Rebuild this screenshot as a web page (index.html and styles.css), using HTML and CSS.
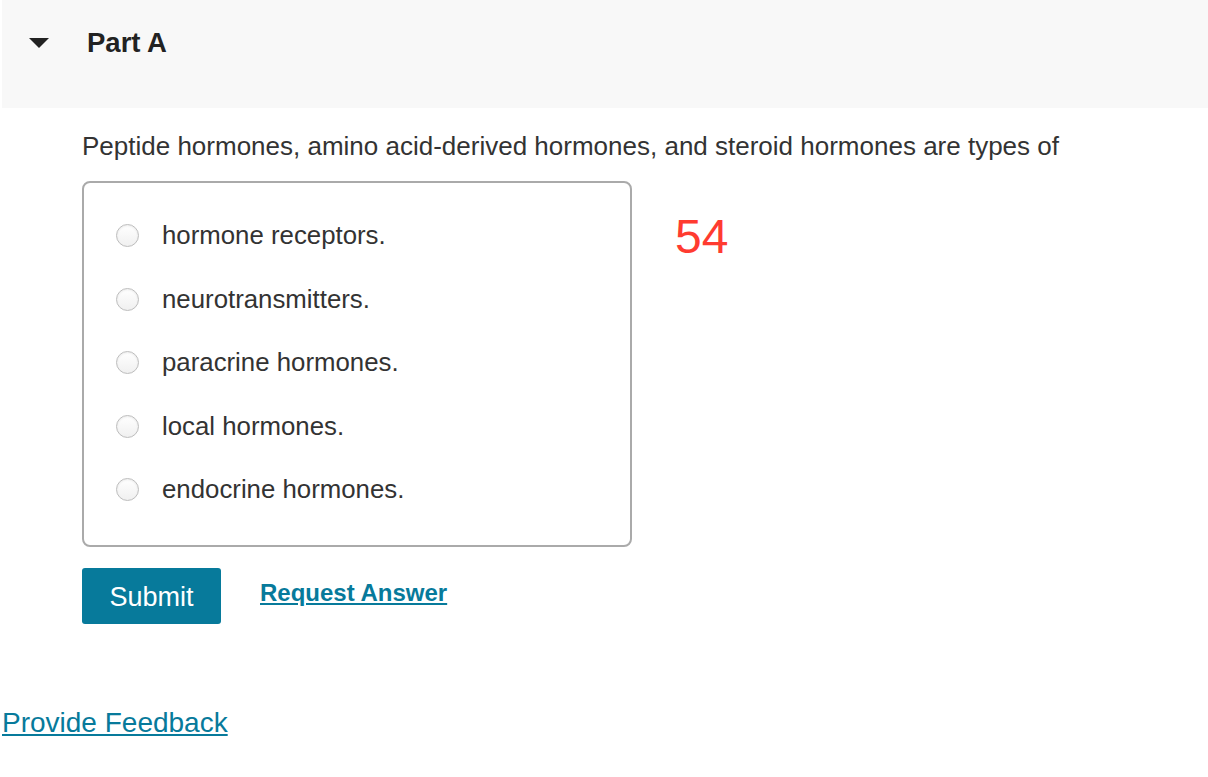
FILE: index.html
```html
<!DOCTYPE html>
<html lang="en">
<head>
  <meta charset="UTF-8">
  <meta name="viewport" content="width=device-width, initial-scale=1.0">
  <title>Part A</title>
  <link rel="stylesheet" href="styles.css">
</head>
<body>
  <div class="part-header">
    <span class="caret"></span>
    <h2>Part A</h2>
  </div>
  <div class="part-body">
    <p class="question">Peptide hormones, amino acid-derived hormones, and steroid hormones are types of</p>
    <div class="answer-row">
      <div class="choices">
        <label class="choice"><span class="radio"></span>hormone receptors.</label>
        <label class="choice"><span class="radio"></span>neurotransmitters.</label>
        <label class="choice"><span class="radio"></span>paracrine hormones.</label>
        <label class="choice"><span class="radio"></span>local hormones.</label>
        <label class="choice"><span class="radio"></span>endocrine hormones.</label>
      </div>
      <div class="note">54</div>
    </div>
    <div class="actions">
      <button class="submit-btn">Submit</button>
      <a href="#" class="request-link">Request Answer</a>
    </div>
  </div>
  <div class="feedback">
    <a href="#">Provide Feedback</a>
  </div>
</body>
</html>
```

FILE: styles.css
```css
body {
  margin: 0;
  padding: 0;
  font-family: "Liberation Sans", Arial, sans-serif;
  color: #333;
  background-color: #fff;
}
.part-header {
  margin-left: 2px;
  height: 108px;
  background-color: #f8f8f8;
  display: flex;
  align-items: flex-start;
}
.caret {
  width: 0;
  height: 0;
  border-left: 10px solid transparent;
  border-right: 10px solid transparent;
  border-top: 10px solid #222;
  margin: 38px 0 0 27px;
}
.part-header h2 {
  margin: 27px 0 0 38px;
  font-size: 27.5px;
  font-weight: bold;
  color: #222;
}
.part-body {
  padding-left: 82px;
}
.question {
  margin: 23px 0 0 0;
  font-size: 26px;
  line-height: 30px;
}
.answer-row {
  display: flex;
  align-items: flex-start;
  margin-top: 20px;
}
.choices {
  box-sizing: border-box;
  width: 550px;
  border: 2px solid #aaa;
  border-radius: 8px;
  padding: 21px 0 23px 32px;
}
.choice {
  display: flex;
  align-items: center;
  height: 63.5px;
  font-size: 25.8px;
}
.choice .radio + * {
  margin-top: 2px;
}
.radio {
  width: 21px;
  height: 21px;
  border: 1px solid #bdbdbd;
  border-radius: 50%;
  background: linear-gradient(#fff, #f0f0f0);
  box-shadow: inset 0 1px 2px rgba(0, 0, 0, 0.08);
  margin-right: 23px;
}
.note {
  margin: 28px 0 0 43px;
  font-size: 48px;
  color: #ff3b30;
}
.actions {
  display: flex;
  align-items: center;
  margin-top: 21px;
  gap: 39px;
}
.submit-btn {
  width: 139px;
  height: 56px;
  border: none;
  border-radius: 3px;
  background-color: #077a9b;
  color: #fff;
  font-family: "Liberation Sans", Arial, sans-serif;
  font-size: 27px;
  padding: 3px 0 0 0;
}
.request-link {
  font-size: 24px;
  font-weight: bold;
  color: #077a9b;
  margin-top: -6px;
}
.feedback {
  margin-top: 83px;
  padding-left: 2px;
}
.feedback a {
  font-size: 28px;
  color: #077a9b;
}
```
